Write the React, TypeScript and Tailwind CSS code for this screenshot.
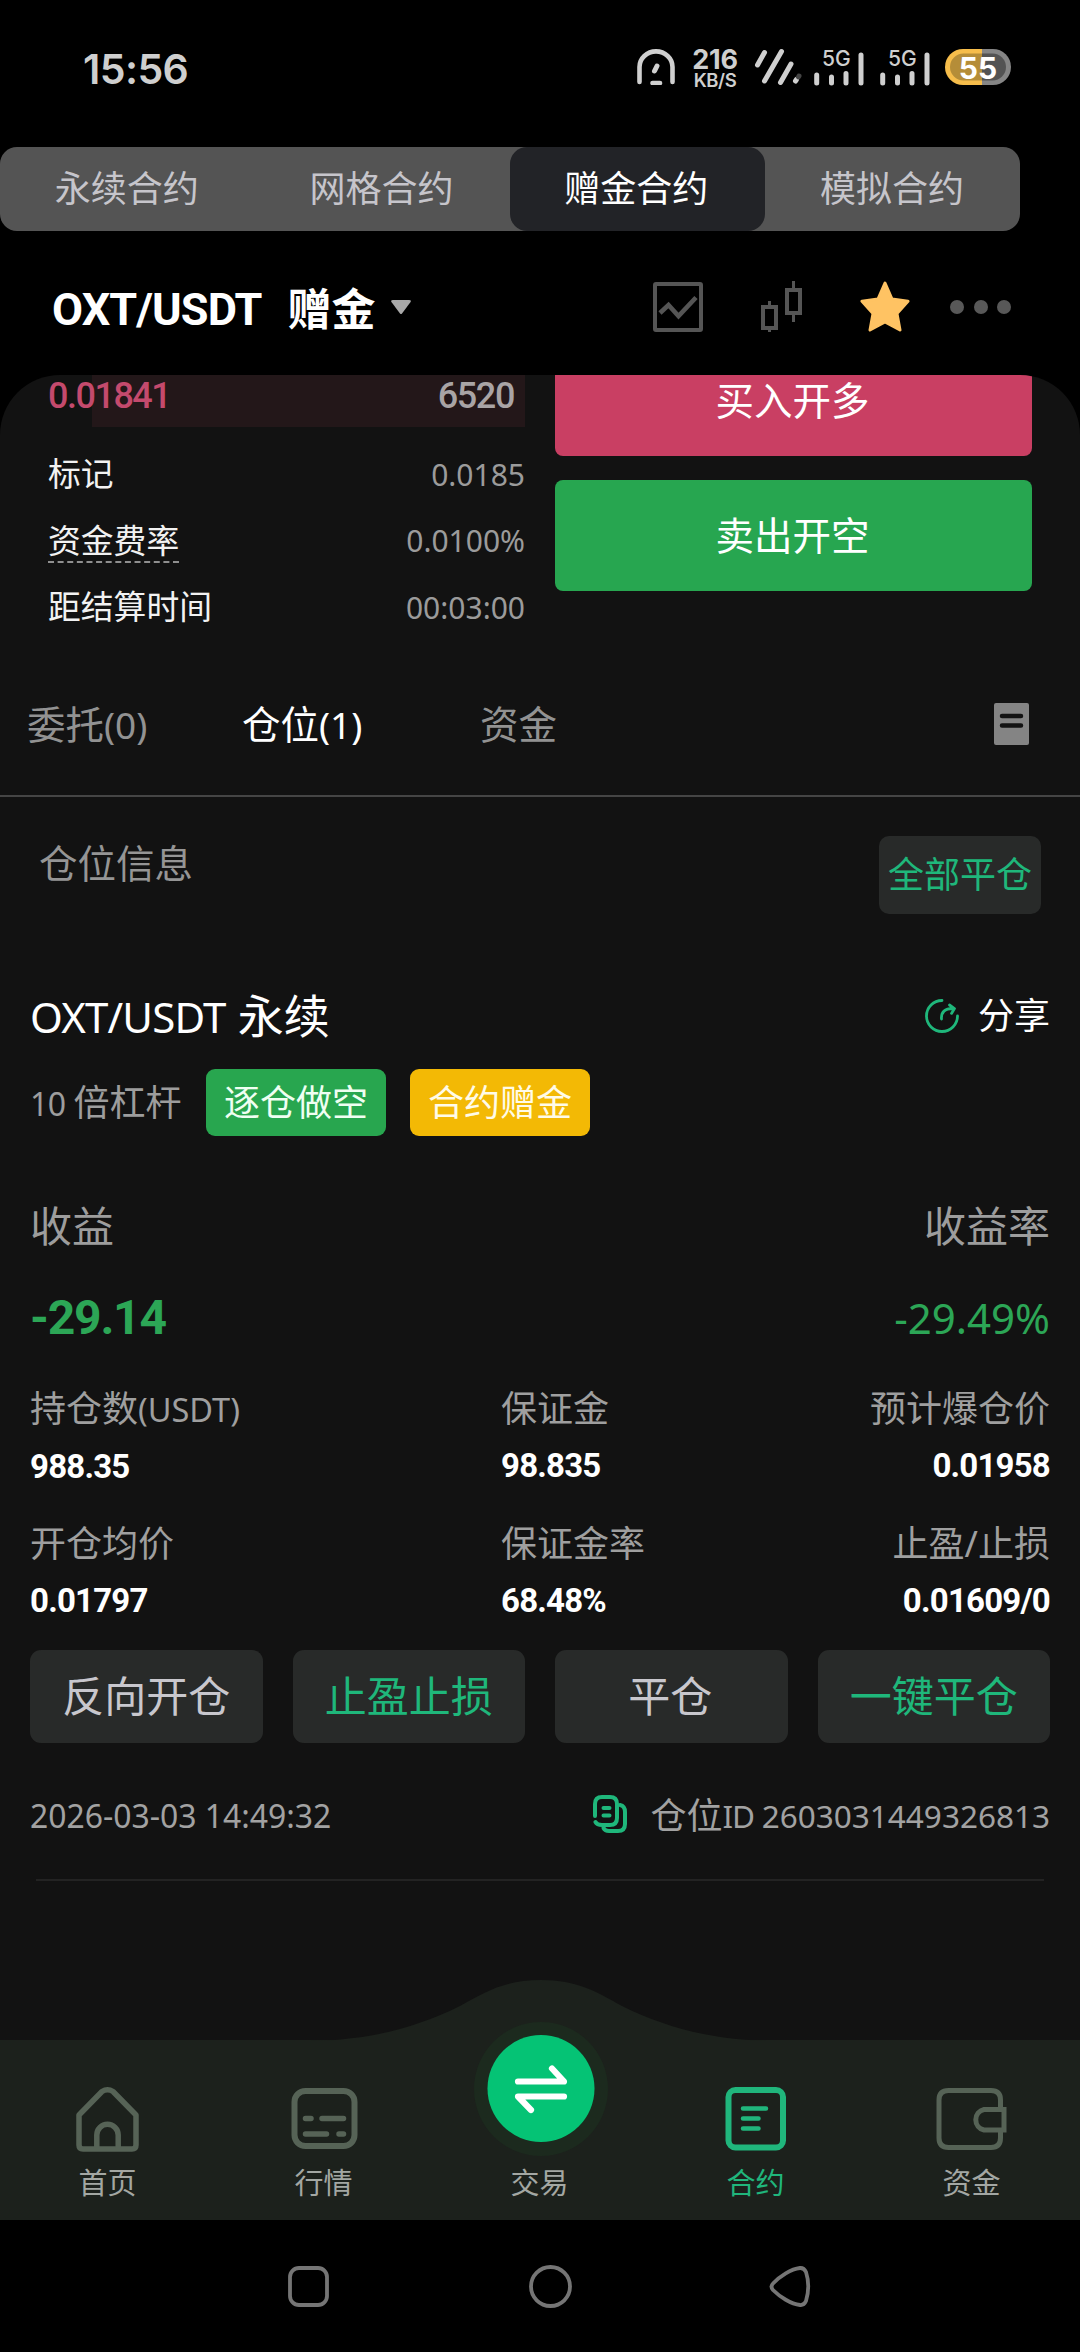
import React from "react";

const num = "font-['Roboto','Noto_Sans_CJK_SC',sans-serif]";

function StatusBar() {
  return (
    <div className="flex h-[147px] items-start pt-[42px] pl-[83px] pr-[69px] text-[#cfcfcf]">
      <div className="mt-[2px] font-['Inter',sans-serif] text-[41px] leading-[50px] font-semibold tracking-[-0.6px]">15:56</div>
      <div className="ml-auto flex h-[50px] items-center">
        <svg width="38" height="36" viewBox="0 0 38 36" fill="none" stroke="#cfcfcf" strokeWidth="4.6" strokeLinecap="round">
          <path d="M2.5 33V18a16.5 15.6 0 0 1 33 0V33M15.500 34h7.500" />
          <path d="M17.500 22l2.500-5" strokeWidth="5" />
        </svg>
        <div className="ml-[17px] flex w-[46px] flex-col items-center pt-[4px] font-['Inter',sans-serif] font-bold">
          <span className="text-[27px] leading-[20px] tracking-[-0.300px]">216</span>
          <span className="mt-[1px] text-[18.500px] leading-[18px] font-semibold tracking-[-0.400px]">KB/S</span>
        </div>
        <svg className="ml-[16px]" width="48" height="38" viewBox="0 0 48 38" fill="none" stroke="#cfcfcf" strokeWidth="5" strokeLinecap="round">
          <path d="M3.500 17L10.500 4.500M10.500 33L27.500 3.500M26.500 34.500L37 16M41.500 33l1-1.500" />
          <path d="M44.500 29l.5-1" stroke="#444" />
        </svg>
        <Signal className="ml-[12px] overflow-visible" />
        <Signal className="ml-[16px] overflow-visible" />
        <div className="relative ml-[15px] flex h-[36px] w-[66px] items-center justify-center">
          <svg className="absolute inset-0" width="66" height="36" viewBox="0 0 66 36">
            <path d="M37 0H18a18 18 0 0 0 0 36H37z" fill="#f6bd4b" />
            <path d="M37 0H48a18 18 0 0 1 0 36H37z" fill="#858585" />
            <path d="M37 4.500H18.500a13.500 13.500 0 0 0 0 27H37z" fill="#b58d38" />
            <path d="M37 4.500H47.500a13.500 13.500 0 0 1 0 27H37z" fill="#535353" />
          </svg>
          <span className="relative mt-[2px] font-['Inter',sans-serif] text-[30px] leading-[32px] font-bold text-white">55</span>
        </div>
      </div>
    </div>
  );
}

function Signal({ className }: { className: string }) {
  return (
    <svg className={className} width="50" height="38" viewBox="0 0 50 38" fill="none" stroke="#cfcfcf" strokeWidth="5" strokeLinecap="round">
      <path d="M2.700 27v8M17.500 29v6M32 25.500V35M47 7v28" />
      <text x="8" y="18" fill="#cfcfcf" stroke="none" className="font-['Inter',sans-serif] text-[21px] font-medium">5G</text>
    </svg>
  );
}

function ModeTabs() {
  return (
    <div className="flex h-[84px] w-[1020px] rounded-[17px] bg-[#545454] text-[36px] leading-[84px] text-[#c6c5cb]">
      {["永续合约", "网格合约", "赠金合约", "模拟合约"].map((t, i) => (
        <div key={t} className={i === 2 ? "flex-1 rounded-[17px] bg-[#222327] pr-[2px] text-center text-white" : "flex-1 pr-[1px] text-center"}>
          {t}
        </div>
      ))}
    </div>
  );
}

function PairHeader() {
  return (
    <div className="flex h-[144px] items-center pl-[52px] pr-[69px] pt-[8px]">
      <span className={`${num} pt-[5px] text-[45px] leading-[60px] font-bold tracking-[-0.9px] text-white`}>OXT/USDT</span>
      <span className="ml-[26px] pt-[3px] text-[44px] leading-[60px] font-bold text-white">赠金</span>
      <svg className="ml-[15px]" width="20" height="15" viewBox="0 0 20 15" fill="#a9a9a9"><path d="M2 0h16q3 0 1.200 2.600L11 13.500q-1 1.200-2 0L.8 2.600Q-1 0 2 0z" /></svg>
      <div className="ml-auto flex items-center pb-[1px]">
        <svg width="50" height="50" viewBox="0 0 50 50" fill="none" stroke="#555" strokeWidth="4">
          <rect x="2" y="2" width="46" height="46" rx="1" />
          <path d="M7 31l8.500-8L25.500 34 43 15.500" strokeWidth="4.600" />
        </svg>
        <svg className="ml-[58px]" width="41" height="51" viewBox="0 0 41 51" fill="none" stroke="#555" strokeWidth="4">
          <rect x="2" y="26" width="13" height="21" />
          <rect x="26" y="9" width="13" height="23" />
          <path d="M8.500 20v5M8.500 47v4M32.500 0v8M32.500 33v8" strokeWidth="3" />
        </svg>
        <svg className="ml-[57px]" width="52" height="51" viewBox="0 0 52 51">
          <path d="M26 2l7 16 16 2.200-11 12.300 3 16.500-15-8-15 8 3-16.500L3 20.200 19 18z" fill="#ffc363" stroke="#ffc363" strokeWidth="3" strokeLinejoin="round" />
        </svg>
        <div className="ml-[39px] flex gap-[9.500px]">
          <i className="size-[14px] rounded-full bg-[#585858]" />
          <i className="size-[14px] rounded-full bg-[#585858]" />
          <i className="size-[14px] rounded-full bg-[#585858]" />
        </div>
      </div>
    </div>
  );
}

function MarketRow({ label, value, dashed }: { label: string; value: string; dashed?: boolean }) {
  return (
    <div className="flex h-[66.500px] items-center justify-between">
      <span className={dashed ? "-mb-[2px] border-b-2 border-dashed border-[#8f8f8f] text-[32.800px] leading-[41px] text-[#f2f2f2]" : "text-[32.800px] leading-[42px] text-[#f2f2f2]"}>{label}</span>
      <span className="pt-[1px] text-[30px] leading-[42px] text-[#9b9b9b]">{value}</span>
    </div>
  );
}

function Market() {
  return (
    <div className="flex h-[266px] justify-between pl-[48px] pr-[48px]">
      <div className="w-[477px]">
        <div className="flex h-[52px] justify-between bg-[linear-gradient(90deg,transparent_0_44px,#231719_44px)]">
          <span className={`${num} text-[36px] leading-[42px] font-medium tracking-[-1.500px] text-[#c44a6d]`}>0.01841</span>
          <span className={`${num} pr-[11px] text-[36px] leading-[42px] font-medium tracking-[-1.400px] text-[#a9a4a5]`}>6520</span>
        </div>
        <div className="pt-[14px]">
          <MarketRow label="标记" value="0.0185" />
          <MarketRow label="资金费率" value="0.0100%" dashed />
          <MarketRow label="距结算时间" value="00:03:00" />
        </div>
      </div>
      <div className="-mt-[30px] flex w-[477px] flex-col gap-[24px] text-center text-[38.500px] leading-[110px] text-white">
        <div className="h-[111px] rounded-[8px] bg-[#c93f63] pr-[2px]">买入开多</div>
        <div className="h-[111px] rounded-[8px] bg-[#27a650] pr-[2px]">卖出开空</div>
      </div>
    </div>
  );
}

function OrderTabs() {
  return (
    <div className="flex h-[156px] items-center border-b-2 border-[#454545] pt-[14px] pl-[27px] pr-[51px] text-[38.500px] text-[#929292]">
      <span className="w-[215px]">委托<span className="text-[37px]">(0)</span></span>
      <span className="w-[238px] text-white">仓位<span className="text-[37px]">(1)</span></span>
      <span>资金</span>
      <svg className="ml-auto -mt-[2px]" width="35" height="42" viewBox="0 0 35 42">
        <rect width="35" height="42" rx="2" fill="#848484" />
        <path d="M8 13h19M8 22.500h19" stroke="#121212" strokeWidth="4.500" strokeLinecap="round" />
      </svg>
    </div>
  );
}

function Stat({ label, value, align }: { label: React.ReactNode; value: string; align?: boolean }) {
  return (
    <div className={align ? "text-right" : ""}>
      <div className="text-[36px] leading-[54px] text-[#9f9f9f]">{label}</div>
      <div className={`${num} mt-[3px] text-[33px] leading-[54px] font-bold tracking-[-0.800px] text-white`}>{value}</div>
    </div>
  );
}

function Position() {
  return (
    <div className="px-[30px]">
      <div className="flex h-[117px] items-start justify-between pt-[39px] pr-[9px] pl-[9px]">
        <span className="text-[38.500px] leading-[54px] text-[#959595]">仓位信息</span>
        <span className="h-[78px] w-[162px] rounded-[10px] bg-[#282a29] text-center text-[36px] leading-[77px] text-[#1fb77b]">全部平仓</span>
      </div>
      <div className="mt-[72px] flex h-[60px] items-center justify-between text-white">
        <span className="text-[46px] leading-[60px]"><span className="mr-[2px] text-[42px] tracking-[-0.800px]">OXT/USDT </span>永续</span>
        <span className="flex items-center text-[36px] leading-[60px]">
          <svg className="mr-[19px]" width="34" height="34" viewBox="0 0 34 34" fill="none" stroke="#1fb77b" strokeWidth="2.800" strokeLinecap="round" strokeLinejoin="round">
            <path d="M17 1.500A15.500 15.500 0 1 0 32.500 17M16.500 20c-.5-7 3.500-10.500 11-10.500M24.500 6l5 3.600-3 4.800" />
          </svg>
          分享
        </span>
      </div>
      <div className="mt-[23px] flex h-[67px] items-center text-[36px]">
        <span className="text-[#9d9d9d]"><span className="text-[32px] tracking-[-0.500px]">10 </span>倍杠杆</span>
        <span className="ml-auto w-[180px] rounded-[9px] bg-[#28a64f] text-center leading-[67px] text-[#effff2]">逐仓做空</span>
        <span className="mr-[460px] ml-[24px] w-[180px] rounded-[9px] bg-[#f3b905] text-center leading-[67px] text-[#fffbe8]">合约赠金</span>
      </div>
      <div className="mt-[60px] flex justify-between text-[42px] leading-[60px] text-[#9d9d9d]">
        <span>收益</span>
        <span>收益率</span>
      </div>
      <div className="mt-[32px] flex justify-between leading-[60px] text-[#2ca656]">
        <span className={`${num} text-[48px] font-bold tracking-[-1.200px]`}>-29.14</span>
        <span className="text-[42px]">-29.49%</span>
      </div>
      <div className="mt-[34px] grid grid-cols-[471px_1fr_1fr] gap-y-[23px]">
        <Stat label={<>持仓数<span className="text-[32.500px]">(USDT)</span></>} value="988.35" />
        <Stat label="保证金" value="98.835" />
        <Stat label="预计爆仓价" value="0.01958" align />
        <Stat label="开仓均价" value="0.01797" />
        <Stat label="保证金率" value="68.48%" />
        <Stat label="止盈/止损" value="0.01609/0" align />
      </div>
      <div className="mt-[22px] grid grid-cols-4 gap-[30px] text-center text-[42px] leading-[92px] text-[#c8c7cd]">
        <span className="h-[93px] rounded-[11px] bg-[#282a29]">反向开仓</span>
        <span className="h-[93px] rounded-[11px] bg-[#282a29] text-[#1fb77b]">止盈止损</span>
        <span className="h-[93px] rounded-[11px] bg-[#282a29] pr-[2px]">平仓</span>
        <span className="h-[93px] rounded-[11px] bg-[#282a29] text-[#1fb77b]">一键平仓</span>
      </div>
      <div className="mt-[43px] flex h-[60px] items-center justify-between text-[31.500px] text-[#a2a2a2]">
        <span className="text-[31.900px]">2026-03-03 14:49:32</span>
        <span className="flex items-center leading-[60px]">
          <svg className="mr-[22px] -mt-[4px]" width="35" height="39" viewBox="0 0 35 39" fill="none" stroke="#1fb77b" strokeWidth="4" strokeLinecap="round">
            <path d="M2 21V9q0-7 7-7h8q7 0 7 7v14q0 7-7 7H9q-5 0-6.500-3" />
            <path d="M27 10q5 1 5 7v12q0 7-7 7h-9q-4 0-5.500-3" />
            <path d="M10.500 13h6M10.500 20.500h6" />
          </svg>
          <span className="text-[36px]">仓位</span>
          <span className="mr-[8px] tracking-[-1.200px]">ID</span>
          <span>2603031449326813</span>
        </span>
      </div>
      <div className="mx-[6px] mt-[33px] h-[2px] bg-[#232323]" />
    </div>
  );
}

const nav = [
  {
    label: "首页",
    icon: (
      <g stroke="#566356" strokeWidth="5.500" strokeLinejoin="round">
        <path d="M31 5.500Q36.500 2 42 5.500L65 29v30q0 4-4 4H12q-4 0-4-4V29z" />
        <path d="M25.800 62V49a10.700 10.700 0 0 1 21.400 0v13" />
      </g>
    ),
  },
  {
    label: "行情",
    icon: (
      <g stroke="#566356" strokeWidth="6" strokeLinecap="round">
        <rect x="7.500" y="5" width="60" height="55" rx="11" />
        <path d="M18.500 32.500h5.500M35 32.500H56.500M18.500 48H39.500M52 48H56.500" strokeWidth="5.500" />
      </g>
    ),
  },
  { label: "交易", icon: null },
  {
    label: "合约",
    icon: (
      <g stroke="#20b67c" strokeWidth="6" strokeLinecap="round">
        <rect x="9.500" y="4" width="54.500" height="57.500" rx="7" />
        <path d="M24 22.500H47M24 32.500H39.500M24 42.500H39.500" strokeWidth="4.500" />
      </g>
    ),
  },
  {
    label: "资金",
    icon: (
      <g stroke="#566356" strokeWidth="5">
        <path d="M65.500 25V14q0-9.500-9.500-9.500H13.500Q4 4.500 4 14v38q0 9.500 9.500 9.500h42.500Q65.500 61.500 65.500 52V44" />
        <path d="M69 23.500V44.500M69 23.500H49a10.500 10.500 0 0 0 0 20.500h20z" />
      </g>
    ),
  },
];

function BottomNav() {
  return (
    <div className="relative h-[180px] bg-[#1c211c]">
      <svg className="absolute -top-[60px] left-0" width="1080" height="180" viewBox="0 0 1080 180">
        <path d="M310 61C370 60 415 48 460 26C485 12 505 0 541 0S597 12 622 26C667 48 712 60 772 61z" fill="#1c211c" />
        <circle cx="541" cy="109" r="67" fill="#1c2a1e" />
        <circle cx="541" cy="108.500" r="53.500" fill="#05c375" />
        <path d="M518 101.500h46L552 88.500M564 116.500H518L531 130" fill="none" stroke="#fff" strokeWidth="6.200" strokeLinecap="round" strokeLinejoin="round" />
      </svg>
      <div className="relative flex pt-[45.500px]">
        {nav.map((n) => (
          <div key={n.label} className="flex flex-1 flex-col items-center pr-[1px]">
            <svg width="74" height="66" viewBox="0 0 74 66" fill="none">{n.icon}</svg>
            <span className={n.label === "合约" ? "mt-[11px] text-[29px] leading-[40px] text-[#20b67c]" : "mt-[11px] text-[29px] leading-[40px] text-[#a3a7a3]"}>{n.label}</span>
          </div>
        ))}
      </div>
    </div>
  );
}

function SystemNav() {
  return (
    <div className="flex h-[132px] items-start pt-[44px] pl-[287px]">
      <svg width="524" height="45" viewBox="0 0 524 45" fill="none" stroke="#757575" strokeWidth="3.800">
        <rect x="3" y="4" width="37" height="37" rx="9" />
        <circle cx="263.500" cy="22.500" r="19.500" />
        <path d="M486 19.500C493 12 504 5 513 4q4-.3 6 4 4.500 14 0 29-2 4.500-6 4C504 40 493 33 486 26q-3-3.500 0-6.500z" strokeLinejoin="round" />
      </svg>
    </div>
  );
}

export default function App() {
  return (
    <div className="h-[2352px] w-[1080px] overflow-hidden bg-black font-['Noto_Sans','Noto_Sans_CJK_SC',sans-serif]" lang="zh-CN">
      <StatusBar />
      <ModeTabs />
      <PairHeader />
      <div className="h-[1665px] overflow-hidden rounded-t-[60px] bg-[#121212]">
        <Market />
        <OrderTabs />
        <Position />
      </div>
      <BottomNav />
      <SystemNav />
    </div>
  );
}
